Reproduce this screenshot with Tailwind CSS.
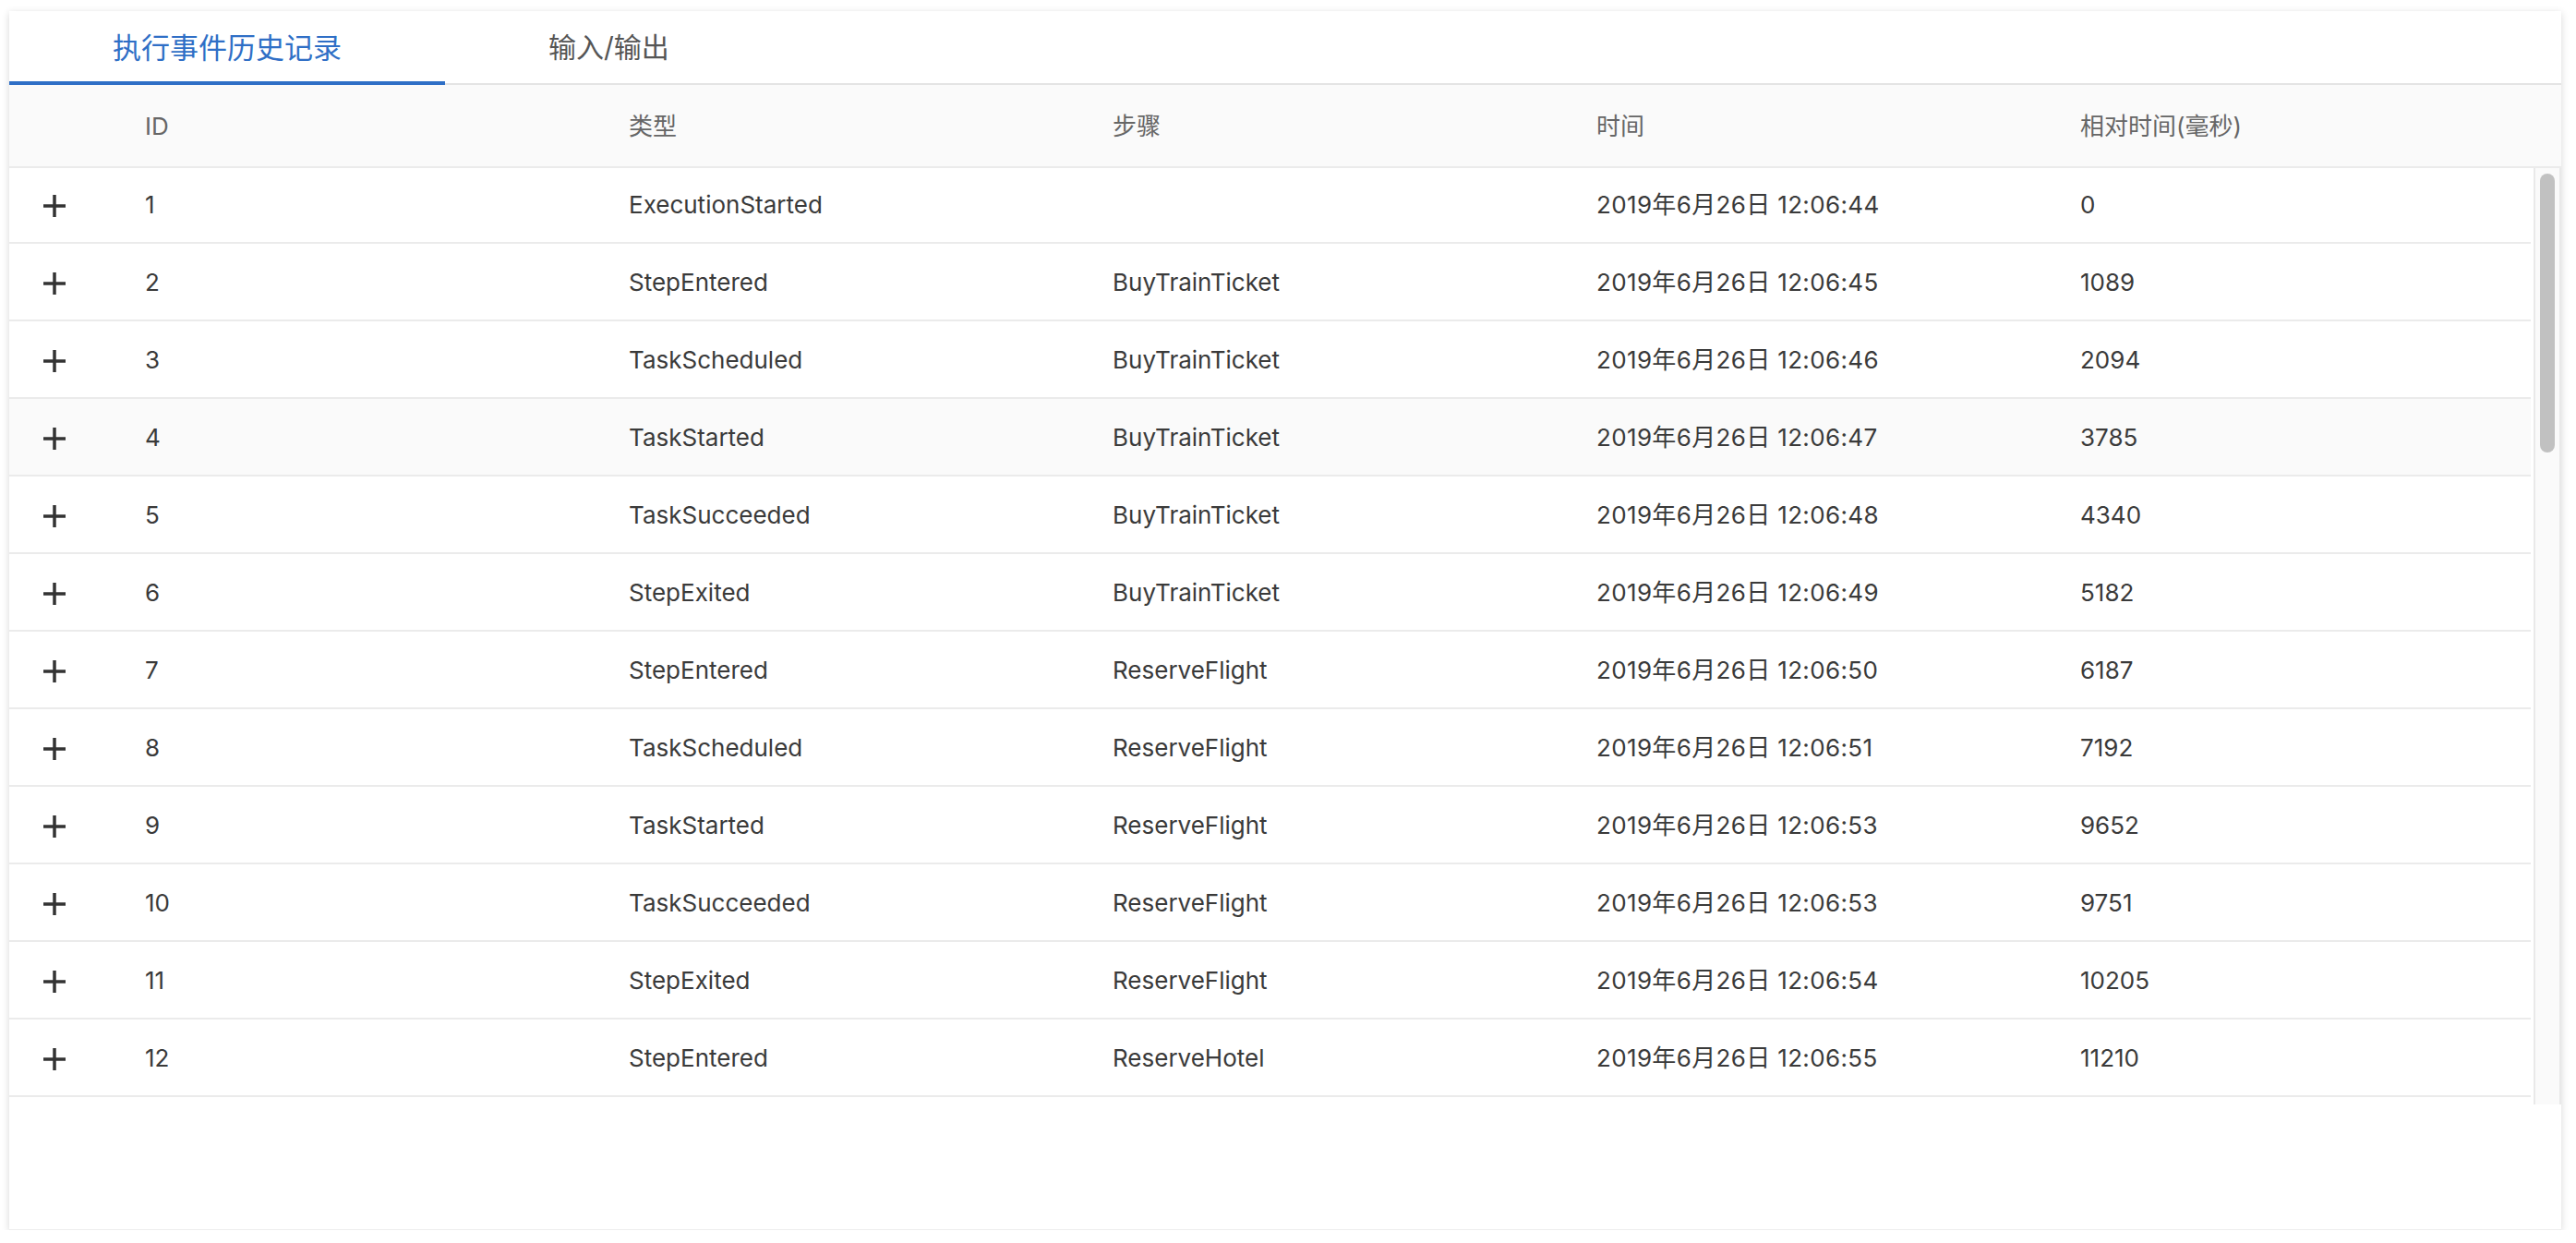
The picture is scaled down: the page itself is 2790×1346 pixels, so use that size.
<!DOCTYPE html>
<html lang="zh-CN">
<head>
  <meta charset="UTF-8" />
  <title>执行事件历史记录</title>
  <script src="https://cdn.jsdelivr.net/npm/@tailwindcss/browser@4"></script>
</head>
<body class="bg-white text-[#3a3a3a] font-['Inter','Noto_Sans_CJK_SC',sans-serif]">

  <div class="mx-[10px] mt-[12px] w-[2764px] h-[1320px] bg-white border-b border-[#eeeeee] shadow-[0_2px_8px_rgba(0,0,0,0.16)]">

    <!-- Tabs -->
    <div class="flex h-[80px] border-b-2 border-[#e4e4e4]">
      <div class="w-[472px] h-[80px] pt-[4px] border-b-4 border-[#2f6fc6] flex items-center justify-center text-[31px] text-[#2f6fc6]">执行事件历史记录</div>
      <div class="h-[78px] pt-[1px] pl-[112px] flex items-center text-[30px] text-[#555]">输入/输出</div>
    </div>

    <!-- Table header -->
    <div class="grid grid-cols-[147px_524px_524px_524px_524px_1fr] h-[90px] items-center bg-[#fafafa] border-b-2 border-[#ebebeb] text-[26px] text-[#666]">
      <div></div>
      <div>ID</div>
      <div>类型</div>
      <div>步骤</div>
      <div>时间</div>
      <div>相对时间(毫秒)</div>
    </div>

    <div class="flex h-[1014px]">
      <!-- Rows -->
      <div class="w-[2731px] -mt-[2px] text-[26px]">
        <div class="grid grid-cols-[147px_524px_524px_524px_524px_1fr] h-[84px] pt-[1px] items-center border-b-2 border-[#ebebeb]"><svg class="ml-[37px] mt-[3px] w-[24px] h-[24px]" viewBox="0 0 24 24"><path d="M12 0v24M0 12h24" stroke="#333" stroke-width="3.5" fill="none"/></svg><div>1</div><div>ExecutionStarted</div><div></div><div class="tracking-[0.35px]">2019年6月26日 12:06:44</div><div>0</div></div>
        <div class="grid grid-cols-[147px_524px_524px_524px_524px_1fr] h-[84px] pt-[1px] items-center border-b-2 border-[#ebebeb]"><svg class="ml-[37px] mt-[3px] w-[24px] h-[24px]" viewBox="0 0 24 24"><path d="M12 0v24M0 12h24" stroke="#333" stroke-width="3.5" fill="none"/></svg><div>2</div><div>StepEntered</div><div>BuyTrainTicket</div><div class="tracking-[0.35px]">2019年6月26日 12:06:45</div><div>1089</div></div>
        <div class="grid grid-cols-[147px_524px_524px_524px_524px_1fr] h-[84px] pt-[1px] items-center border-b-2 border-[#ebebeb]"><svg class="ml-[37px] mt-[3px] w-[24px] h-[24px]" viewBox="0 0 24 24"><path d="M12 0v24M0 12h24" stroke="#333" stroke-width="3.5" fill="none"/></svg><div>3</div><div>TaskScheduled</div><div>BuyTrainTicket</div><div class="tracking-[0.35px]">2019年6月26日 12:06:46</div><div>2094</div></div>
        <div class="grid grid-cols-[147px_524px_524px_524px_524px_1fr] h-[84px] pt-[1px] items-center border-b-2 border-[#ebebeb] bg-[#fafafa]"><svg class="ml-[37px] mt-[3px] w-[24px] h-[24px]" viewBox="0 0 24 24"><path d="M12 0v24M0 12h24" stroke="#333" stroke-width="3.5" fill="none"/></svg><div>4</div><div>TaskStarted</div><div>BuyTrainTicket</div><div class="tracking-[0.35px]">2019年6月26日 12:06:47</div><div>3785</div></div>
        <div class="grid grid-cols-[147px_524px_524px_524px_524px_1fr] h-[84px] pt-[1px] items-center border-b-2 border-[#ebebeb]"><svg class="ml-[37px] mt-[3px] w-[24px] h-[24px]" viewBox="0 0 24 24"><path d="M12 0v24M0 12h24" stroke="#333" stroke-width="3.5" fill="none"/></svg><div>5</div><div>TaskSucceeded</div><div>BuyTrainTicket</div><div class="tracking-[0.35px]">2019年6月26日 12:06:48</div><div>4340</div></div>
        <div class="grid grid-cols-[147px_524px_524px_524px_524px_1fr] h-[84px] pt-[1px] items-center border-b-2 border-[#ebebeb]"><svg class="ml-[37px] mt-[3px] w-[24px] h-[24px]" viewBox="0 0 24 24"><path d="M12 0v24M0 12h24" stroke="#333" stroke-width="3.5" fill="none"/></svg><div>6</div><div>StepExited</div><div>BuyTrainTicket</div><div class="tracking-[0.35px]">2019年6月26日 12:06:49</div><div>5182</div></div>
        <div class="grid grid-cols-[147px_524px_524px_524px_524px_1fr] h-[84px] pt-[1px] items-center border-b-2 border-[#ebebeb]"><svg class="ml-[37px] mt-[3px] w-[24px] h-[24px]" viewBox="0 0 24 24"><path d="M12 0v24M0 12h24" stroke="#333" stroke-width="3.5" fill="none"/></svg><div>7</div><div>StepEntered</div><div>ReserveFlight</div><div class="tracking-[0.35px]">2019年6月26日 12:06:50</div><div>6187</div></div>
        <div class="grid grid-cols-[147px_524px_524px_524px_524px_1fr] h-[84px] pt-[1px] items-center border-b-2 border-[#ebebeb]"><svg class="ml-[37px] mt-[3px] w-[24px] h-[24px]" viewBox="0 0 24 24"><path d="M12 0v24M0 12h24" stroke="#333" stroke-width="3.5" fill="none"/></svg><div>8</div><div>TaskScheduled</div><div>ReserveFlight</div><div class="tracking-[0.35px]">2019年6月26日 12:06:51</div><div>7192</div></div>
        <div class="grid grid-cols-[147px_524px_524px_524px_524px_1fr] h-[84px] pt-[1px] items-center border-b-2 border-[#ebebeb]"><svg class="ml-[37px] mt-[3px] w-[24px] h-[24px]" viewBox="0 0 24 24"><path d="M12 0v24M0 12h24" stroke="#333" stroke-width="3.5" fill="none"/></svg><div>9</div><div>TaskStarted</div><div>ReserveFlight</div><div class="tracking-[0.35px]">2019年6月26日 12:06:53</div><div>9652</div></div>
        <div class="grid grid-cols-[147px_524px_524px_524px_524px_1fr] h-[84px] pt-[1px] items-center border-b-2 border-[#ebebeb]"><svg class="ml-[37px] mt-[3px] w-[24px] h-[24px]" viewBox="0 0 24 24"><path d="M12 0v24M0 12h24" stroke="#333" stroke-width="3.5" fill="none"/></svg><div>10</div><div>TaskSucceeded</div><div>ReserveFlight</div><div class="tracking-[0.35px]">2019年6月26日 12:06:53</div><div>9751</div></div>
        <div class="grid grid-cols-[147px_524px_524px_524px_524px_1fr] h-[84px] pt-[1px] items-center border-b-2 border-[#ebebeb]"><svg class="ml-[37px] mt-[3px] w-[24px] h-[24px]" viewBox="0 0 24 24"><path d="M12 0v24M0 12h24" stroke="#333" stroke-width="3.5" fill="none"/></svg><div>11</div><div>StepExited</div><div>ReserveFlight</div><div class="tracking-[0.35px]">2019年6月26日 12:06:54</div><div>10205</div></div>
        <div class="grid grid-cols-[147px_524px_524px_524px_524px_1fr] h-[84px] pt-[1px] items-center border-b-2 border-[#ebebeb]"><svg class="ml-[37px] mt-[3px] w-[24px] h-[24px]" viewBox="0 0 24 24"><path d="M12 0v24M0 12h24" stroke="#333" stroke-width="3.5" fill="none"/></svg><div>12</div><div>StepEntered</div><div>ReserveHotel</div><div class="tracking-[0.35px]">2019年6月26日 12:06:55</div><div>11210</div></div>
      </div>

      <!-- Scrollbar -->
      <div class="ml-[3px] w-[30px] h-full bg-[#fafafa] border-x-2 border-[#e9e9e9] pl-[5px] pt-[6px]">
        <div class="w-[16px] h-[302px] rounded-full bg-[#c1c1c1]"></div>
      </div>
    </div>
  </div>

</body>
</html>
